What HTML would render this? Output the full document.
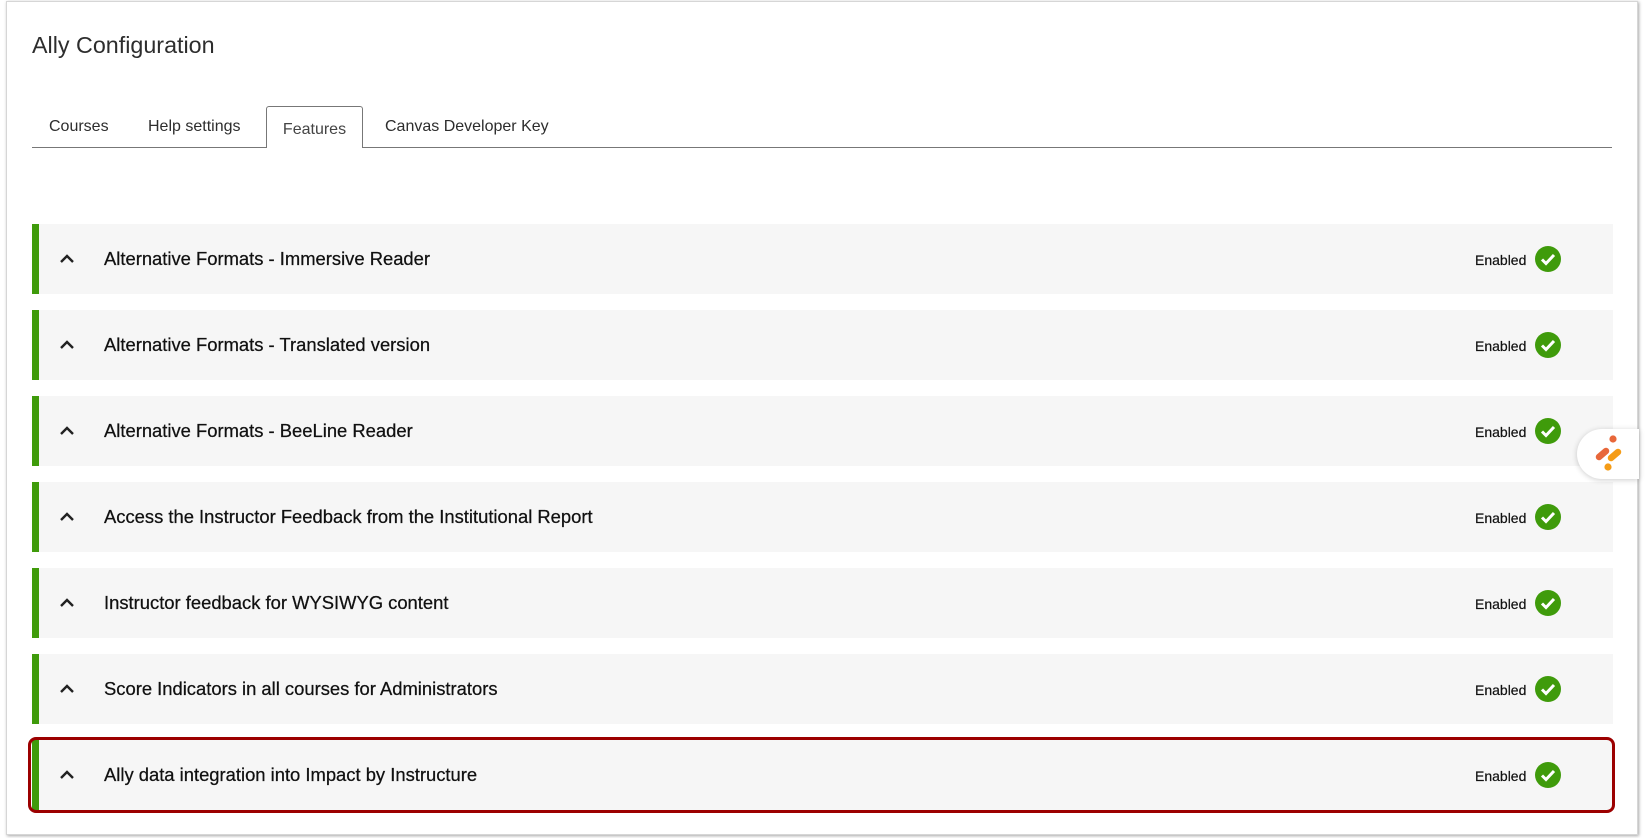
<!DOCTYPE html>
<html><head><meta charset="utf-8"><style>
*{box-sizing:border-box;margin:0;padding:0}
body{width:1646px;height:838px;background:#fff;font-family:"Liberation Sans",Arial,sans-serif;position:relative;overflow:hidden;color:#222}
.frame{position:absolute;left:6px;top:1px;width:1632px;height:834px;border:1px solid #d6d6d6;box-shadow:1px 1px 3px rgba(0,0,0,.35);background:#fff}
h1{position:absolute;left:32px;top:32px;font-size:23.3px;font-weight:normal;color:#2d2d2d}
.tabline{position:absolute;left:32px;top:147px;width:1580px;height:1px;background:#777}
.tab{position:absolute;top:118px;font-size:16px;color:#2d2d2d}
.tabsel{position:absolute;left:266px;top:106px;width:97px;height:42px;border:1px solid #777;border-bottom:none;border-radius:3px 3px 0 0;background:#fff;font-size:16px;color:#444;text-align:center;line-height:42px;padding-top:2px}
.row{position:absolute;left:32px;width:1581px;height:70px;background:#f6f6f6;border-left:7px solid #3f9b0b}
.row .chev{position:absolute;left:20px;top:27px}
.row .t{position:absolute;left:65px;top:0;line-height:70px;font-size:18.4px;color:#111;-webkit-text-stroke:0.25px #111}
.row .en{position:absolute;left:1436px;top:1px;line-height:70px;font-size:14px;color:#111;-webkit-text-stroke:0.2px #111}
.row .ck{position:absolute;left:1496px;top:22px}
.red{position:absolute;left:28px;top:737px;width:1587px;height:76px;border:3px solid #9c0000;border-radius:8px}
.widget{position:absolute;left:1577px;top:429px;width:62px;height:50px;background:#fff;border-radius:25px 0 0 25px;box-shadow:0 1px 6px rgba(0,0,0,.2)}
</style></head><body>
<div class="frame"></div>
<h1>Ally Configuration</h1>
<div class="tabline"></div>
<div class="tab" style="left:49px">Courses</div>
<div class="tab" style="left:148px">Help settings</div>
<div class="tabsel">Features</div>
<div class="tab" style="left:385px">Canvas Developer Key</div>

<div class="row" style="top:224px"><svg class="chev" width="16" height="16" viewBox="0 0 16 16"><path d="M2 11 L8 5 L14 11" fill="none" stroke="#222" stroke-width="2.4"/></svg><div class="t">Alternative Formats - Immersive Reader</div><div class="en">Enabled</div><svg class="ck" width="26" height="26" viewBox="0 0 26 26"><circle cx="13" cy="13" r="13" fill="#3f9b0b"/><path d="M7 13.5 L11 17.5 L19 9" fill="none" stroke="#fff" stroke-width="3"/></svg></div>
<div class="row" style="top:310px"><svg class="chev" width="16" height="16" viewBox="0 0 16 16"><path d="M2 11 L8 5 L14 11" fill="none" stroke="#222" stroke-width="2.4"/></svg><div class="t">Alternative Formats - Translated version</div><div class="en">Enabled</div><svg class="ck" width="26" height="26" viewBox="0 0 26 26"><circle cx="13" cy="13" r="13" fill="#3f9b0b"/><path d="M7 13.5 L11 17.5 L19 9" fill="none" stroke="#fff" stroke-width="3"/></svg></div>
<div class="row" style="top:396px"><svg class="chev" width="16" height="16" viewBox="0 0 16 16"><path d="M2 11 L8 5 L14 11" fill="none" stroke="#222" stroke-width="2.4"/></svg><div class="t">Alternative Formats - BeeLine Reader</div><div class="en">Enabled</div><svg class="ck" width="26" height="26" viewBox="0 0 26 26"><circle cx="13" cy="13" r="13" fill="#3f9b0b"/><path d="M7 13.5 L11 17.5 L19 9" fill="none" stroke="#fff" stroke-width="3"/></svg></div>
<div class="row" style="top:482px"><svg class="chev" width="16" height="16" viewBox="0 0 16 16"><path d="M2 11 L8 5 L14 11" fill="none" stroke="#222" stroke-width="2.4"/></svg><div class="t">Access the Instructor Feedback from the Institutional Report</div><div class="en">Enabled</div><svg class="ck" width="26" height="26" viewBox="0 0 26 26"><circle cx="13" cy="13" r="13" fill="#3f9b0b"/><path d="M7 13.5 L11 17.5 L19 9" fill="none" stroke="#fff" stroke-width="3"/></svg></div>
<div class="row" style="top:568px"><svg class="chev" width="16" height="16" viewBox="0 0 16 16"><path d="M2 11 L8 5 L14 11" fill="none" stroke="#222" stroke-width="2.4"/></svg><div class="t">Instructor feedback for WYSIWYG content</div><div class="en">Enabled</div><svg class="ck" width="26" height="26" viewBox="0 0 26 26"><circle cx="13" cy="13" r="13" fill="#3f9b0b"/><path d="M7 13.5 L11 17.5 L19 9" fill="none" stroke="#fff" stroke-width="3"/></svg></div>
<div class="row" style="top:654px"><svg class="chev" width="16" height="16" viewBox="0 0 16 16"><path d="M2 11 L8 5 L14 11" fill="none" stroke="#222" stroke-width="2.4"/></svg><div class="t">Score Indicators in all courses for Administrators</div><div class="en">Enabled</div><svg class="ck" width="26" height="26" viewBox="0 0 26 26"><circle cx="13" cy="13" r="13" fill="#3f9b0b"/><path d="M7 13.5 L11 17.5 L19 9" fill="none" stroke="#fff" stroke-width="3"/></svg></div>
<div class="row" style="top:740px"><svg class="chev" width="16" height="16" viewBox="0 0 16 16"><path d="M2 11 L8 5 L14 11" fill="none" stroke="#222" stroke-width="2.4"/></svg><div class="t">Ally data integration into Impact by Instructure</div><div class="en">Enabled</div><svg class="ck" width="26" height="26" viewBox="0 0 26 26"><circle cx="13" cy="13" r="13" fill="#3f9b0b"/><path d="M7 13.5 L11 17.5 L19 9" fill="none" stroke="#fff" stroke-width="3"/></svg></div>
<div class="red"></div>

<div class="widget"><svg width="62" height="50" viewBox="0 0 62 50"><circle cx="36" cy="10" r="3.6" fill="#e8673a"/><path d="M22 28 L29 22" stroke="#e8673a" stroke-width="6.5" stroke-linecap="round"/><path d="M34 29 L41 23" stroke="#f59c16" stroke-width="6.5" stroke-linecap="round"/><circle cx="31" cy="38" r="3.6" fill="#f59c16"/></svg></div>
</body></html>
